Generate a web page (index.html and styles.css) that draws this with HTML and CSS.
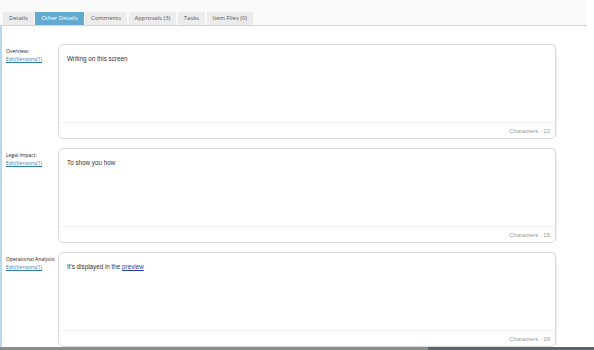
FILE: index.html
```html
<!DOCTYPE html>
<html lang="en">
<head>
<meta charset="UTF-8">
<meta name="viewport" content="width=device-width, initial-scale=1">
<title>Other Details</title>
<link rel="stylesheet" href="styles.css">
</head>
<body>

<div id=page>
	<div class="tabbar">
		<a class="tab">Details</a>
		<a class="tab active">Other Details</a>
		<a class="tab">Comments</a>
		<a class="tab">Approvals (3)</a>
		<a class="tab">Tasks</a>
		<a class="tab">Item Files (0)</a>
	</div>

	<div class="content">
		<div class="field">
			<div class="label">Overview:<br><a href="#">Edit(Versions(1)</a></div>
			<div class="box">
				<div class="text">Writing on this screen</div>
				<div class="count">Characters : 22</div>
			</div>
		</div>
		<div class="field">
			<div class="label">Legal Impact:<br><a href="#">Edit(Versions(1)</a></div>
			<div class="box">
				<div class="text">To show you how</div>
				<div class="count">Characters : 15</div>
			</div>
		</div>
		<div class="field">
			<div class="label">Operational Analysis:<br><a href="#">Edit(Versions(1)</a></div>
			<div class="box">
				<div class="text">It's displayed in the <a href="#">preview</a></div>
				<div class="count">Characters : 29</div>
			</div>
		</div>
	</div>
</div>

<div class="hscroll"><span class="thumb"></span><span class="rest"></span></div>

</body>
</html>
```

FILE: styles.css
```css
*,
*::before,
*::after {
	margin: 0;
	padding: 0;
	box-sizing: border-box;
}
HTML, BODY {
	width: 100%;
	height: 100%;
}
BODY {
	background-color: #fff;
	font-family: "Liberation Sans", Arial, sans-serif;
	color: #333;
	overflow: hidden;
}

#page {
	width: 587px;
}

.tabbar {
	display: flex;
	align-items: flex-end;
	gap: 1.5px;
	height: 26px;
	padding-left: 3px;
	background-color: #fafafa;
	border-bottom: 1px solid #c4d8e7;
}
.tab {
	display: block;
	height: 13px;
	line-height: 13px;
	padding: 0 6px;
	font-family: "Open Sans", sans-serif;
	font-size: 5.9px;
	color: #555;
	background-color: #ececec;
	cursor: pointer;
}
.tab.active {
	color: #fff;
	background-color: #63aad0;
}

.content {
	border-left: 2px solid #b8d8ec;
	padding-top: 18px;
	display: flex;
	flex-direction: column;
	gap: 9px;
	min-height: 330px;
}
.field {
	display: flex;
}
.label {
	width: 56px;
	padding: 3px 0 0 4px;
	font-family: "Open Sans", sans-serif;
	font-size: 5px;
	line-height: 8px;
	color: #222;
}
.label A {
	color: #2a7ab8;
	text-decoration: underline;
}

.box {
	width: 498px;
	height: 95px;
	display: flex;
	flex-direction: column;
	border: 1px solid #dcdcdc;
	border-radius: 5px;
	box-shadow: 1px 0 0 #f0f0f0;
}
.text {
	flex: 1;
	padding: 10px 8px;
	font-size: 6.3px;
	color: #333;
}
.text A {
	color: #1f3fa0;
	text-decoration: underline;
}
.count {
	height: 16px;
	line-height: 16px;
	padding-right: 5px;
	text-align: right;
	font-size: 6px;
	color: #9a9a9a;
	border-top: 1px solid #f3f3f3;
}

/* horizontal scrollbar at the foot of the window */
.hscroll {
	position: fixed;
	left: 0;
	right: 0;
	bottom: 0;
	height: 3px;
	display: flex;
}
.hscroll .thumb {
	width: 428px;
	background-color: #8c8c8c;
}
.hscroll .rest {
	flex: 1;
	background-color: #5d6670;
}
```
